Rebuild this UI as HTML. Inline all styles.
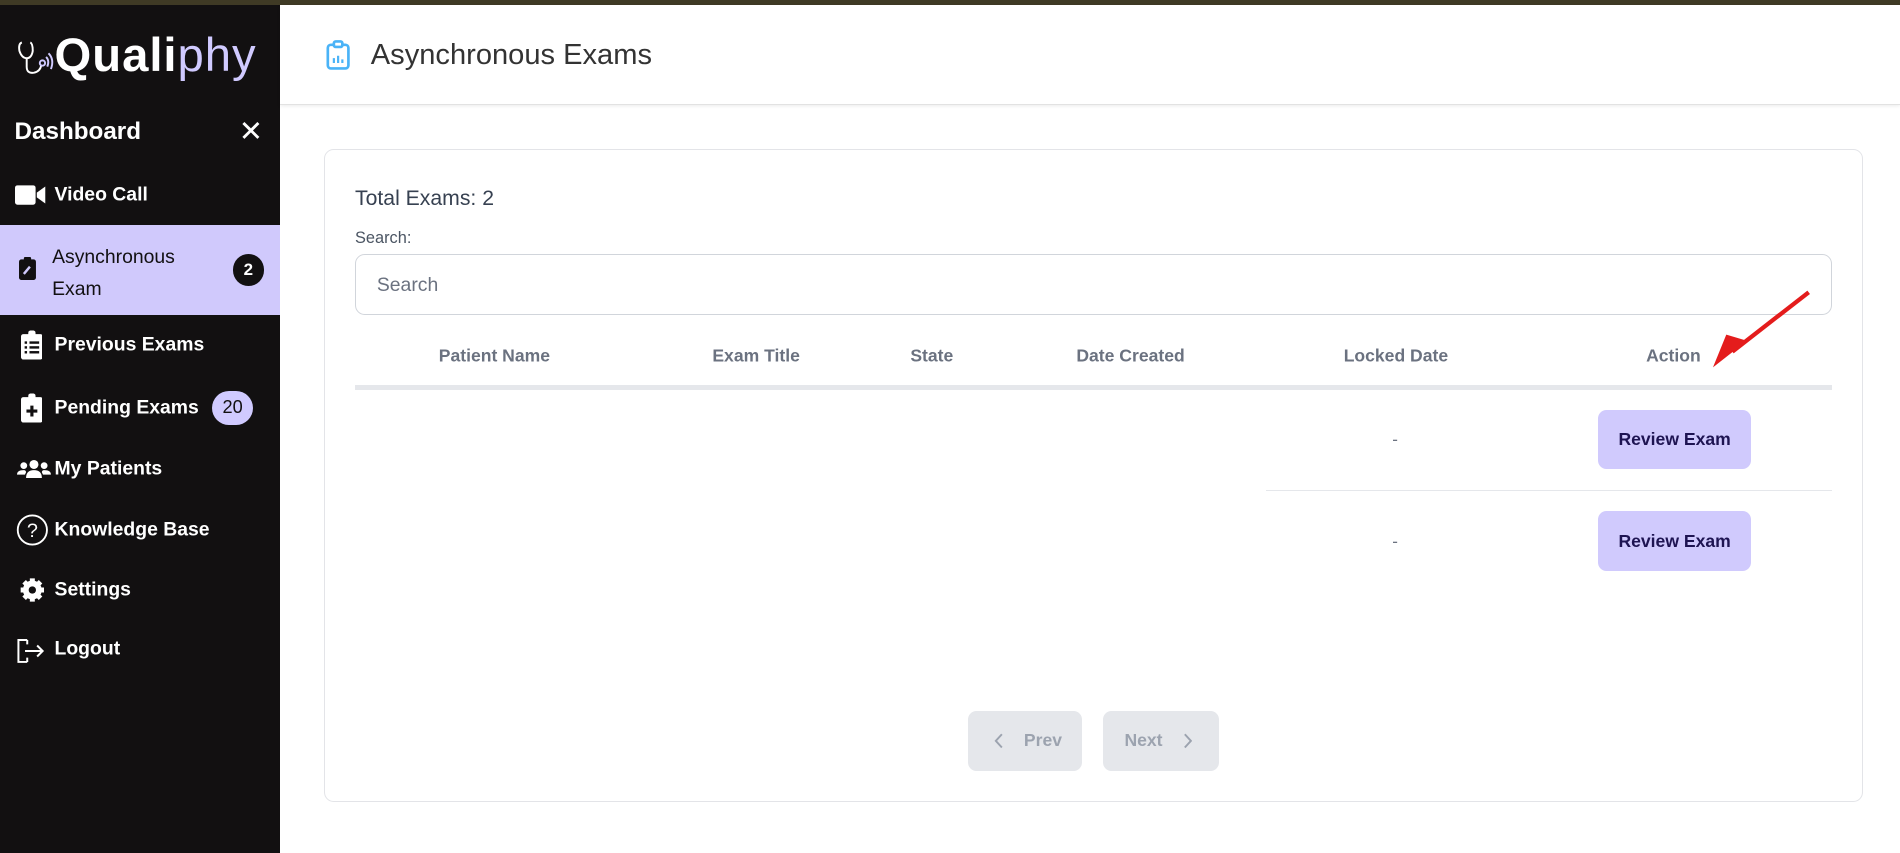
<!DOCTYPE html>
<html><head><meta charset="utf-8"><style>
html,body{margin:0;padding:0;width:1900px;height:853px;overflow:hidden;background:#fff;font-family:"Liberation Sans",sans-serif}
#w{zoom:1.21173;width:1568px;height:704px;position:relative;background:#fff}
.a{position:absolute;white-space:nowrap}
.sb{position:absolute;left:0;top:4px;width:231px;height:700px;background:#121011}
.ni{position:absolute;left:45px;color:#fff;font-size:16px;font-weight:bold;transform:translateY(-50%)}
.ic{position:absolute;left:12px;transform:translateY(-50%)}
.th{position:absolute;top:293px;transform:translate(-50%,-50%);font-size:14.5px;font-weight:bold;color:#6b7280}
.btn{position:absolute;left:1319px;width:126px;height:49px;background:#d0cafd;border-radius:7px;color:#1e1452;font-size:14.5px;font-weight:bold;display:flex;align-items:center;justify-content:center}
.dash{position:absolute;left:1149px;color:#6b7280;font-size:14px}
</style></head><body><div id="w">
<div class="a" style="left:0;top:0;width:1568px;height:4px;background:#3f3a25"></div>
<div class="sb"></div>
<svg class="a" style="left:14px;top:33px" width="32" height="30" viewBox="0 0 32 30" fill="none" stroke="#fff" stroke-width="1.6"><path d="M4 2 Q1 3 2 9 Q4 15 8 15 Q12 15 13 9 Q13 3 11 2"/><path d="M8 15 V22 Q8 28 14 27 Q19 26 20 21"/><circle cx="21" cy="19" r="2.2" stroke="#d0caff"/><path d="M24 14 Q27 17 25 22 M26 11 Q31 16 28 24" stroke="#d0caff"/></svg>
<div class="a" style="left:45px;top:23px;font-size:39px;font-weight:bold;color:#fff;letter-spacing:0.8px">Quali<span style="color:#d0caff;font-weight:normal">phy</span></div>
<div class="a" style="left:12px;top:97px;font-size:20px;font-weight:bold;color:#fff">Dashboard</div>
<div class="a" style="left:197px;top:94px;font-size:24px;color:#fff">✕</div>
<svg class="ic" style="top:161px" width="26" height="18" viewBox="0 0 26 18"><rect x="0" y="1" width="17" height="16" rx="2" fill="#fff"/><path d="M18 7 L25 2 V16 L18 11Z" fill="#fff"/></svg>
<div class="ni" style="top:161px">Video Call</div>
<div class="a" style="left:0;top:186px;width:231px;height:74px;background:#d0c9fc"></div>
<svg class="a" style="left:16px;top:212px" width="14" height="19" viewBox="0 0 14 19"><rect x="0" y="2" width="14" height="17" rx="2" fill="#121011"/><rect x="4" y="0" width="6" height="4" rx="1" fill="#121011"/><path d="M4 14 L9 8" stroke="#d0c9fc" stroke-width="2"/></svg>
<div class="a" style="left:43px;top:200px;font-size:16px;color:#121011;line-height:26px">Asynchronous<br>Exam</div>
<div class="a" style="left:192px;top:210px;width:26px;height:26px;border-radius:13px;background:#121011;color:#fff;font-weight:bold;font-size:14px;text-align:center;line-height:26px">2</div>
<svg class="ic" style="top:285px;left:17px" width="18" height="24" viewBox="0 0 18 24"><rect x="0" y="3" width="18" height="21" rx="2" fill="#fff"/><rect x="6" y="0" width="6" height="5" rx="2" fill="#fff"/><g fill="#121011"><rect x="3" y="9" width="2" height="2"/><rect x="7" y="9" width="8" height="2"/><rect x="3" y="13" width="2" height="2"/><rect x="7" y="13" width="8" height="2"/><rect x="3" y="17" width="2" height="2"/><rect x="7" y="17" width="8" height="2"/></g></svg>
<div class="ni" style="top:285px">Previous Exams</div>
<svg class="ic" style="top:337px;left:17px" width="18" height="24" viewBox="0 0 18 24"><rect x="0" y="3" width="18" height="21" rx="2" fill="#fff"/><rect x="6" y="0" width="6" height="5" rx="2" fill="#fff"/><path d="M9 10 V19 M4.5 14.5 H13.5" stroke="#121011" stroke-width="2.6"/></svg>
<div class="ni" style="top:337px">Pending Exams</div>
<div class="a" style="left:175px;top:323px;width:34px;height:28px;border-radius:14px;background:#d0caff;color:#121011;font-size:15px;text-align:center;line-height:28px">20</div>
<svg class="ic" style="top:387px;left:14px" width="28" height="18" viewBox="0 0 30 18" fill="#fff"><circle cx="15" cy="5" r="4"/><path d="M8 17 Q8 10 15 10 Q22 10 22 17Z"/><circle cx="6" cy="6" r="3"/><circle cx="24" cy="6" r="3"/><path d="M0 14 Q0 10 6 10 Q8 10 8 12 L7 14Z"/><path d="M30 14 Q30 10 24 10 Q22 10 22 12 L23 14Z"/></svg>
<div class="ni" style="top:387px">My Patients</div>
<svg class="ic" style="top:437px;left:13px" width="27" height="27" viewBox="0 0 28 28"><circle cx="14" cy="14" r="12.5" fill="none" stroke="#fff" stroke-width="1.6"/><text x="14" y="20" text-anchor="middle" fill="#fff" font-size="17" font-family="Liberation Sans">?</text></svg>
<div class="ni" style="top:437px">Knowledge Base</div>
<svg class="ic" style="top:487px;left:16px" width="22" height="22" viewBox="0 0 24 24"><g fill="#fff"><circle cx="12" cy="12" r="8.5"/><g stroke="#fff" stroke-width="4.5"><path d="M12 1.5V22.5M1.5 12H22.5M4.6 4.6L19.4 19.4M19.4 4.6L4.6 19.4"/></g></g><circle cx="12" cy="12" r="3.3" fill="#121011"/></svg>
<div class="ni" style="top:487px">Settings</div>
<svg class="ic" style="top:537px;left:13px" width="24" height="20" viewBox="0 0 26 22" fill="none" stroke="#fff" stroke-width="1.8"><path d="M10 1H2V21H10M10 1V5M10 21V17"/><path d="M8 11H24M19 6L24 11L19 16"/></svg>
<div class="ni" style="top:536px">Logout</div>

<div class="a" style="left:231px;top:4px;width:1337px;height:82px;background:#fff;border-bottom:1px solid #e2e2e2;box-shadow:0 1px 3px rgba(0,0,0,0.08)"></div>
<svg class="a" style="left:269px;top:33px" width="20" height="25" viewBox="0 0 20 25" fill="none" stroke="#4ab3f7" stroke-width="2.2"><rect x="1.5" y="4" width="17" height="19.5" rx="2.5"/><rect x="6.5" y="1.2" width="7" height="4.5" rx="1.5" fill="#fff"/><path d="M6.5 19V15M10 19V13M13.5 19V16" stroke-width="1.8"/></svg>
<div class="a" style="left:306px;top:32px;font-size:24px;color:#333">Asynchronous Exams</div>

<div class="a" style="left:267px;top:123px;width:1269px;height:537px;border:1px solid #e3e4e8;border-radius:8px;background:#fff"></div>
<div class="a" style="left:293px;top:154px;font-size:17.5px;color:#374151">Total Exams: 2</div>
<div class="a" style="left:293px;top:189px;font-size:13.5px;color:#4b5563">Search:</div>
<div class="a" style="left:293px;top:210px;width:1217px;height:48px;border:1px solid #d1d5db;border-radius:8px"></div>
<div class="a" style="left:311px;top:226px;font-size:16px;color:#6b7280">Search</div>
<div class="th" style="left:408px;top:294px">Patient Name</div>
<div class="th" style="left:624px;top:294px">Exam Title</div>
<div class="th" style="left:769px;top:294px">State</div>
<div class="th" style="left:933px;top:294px">Date Created</div>
<div class="th" style="left:1152px;top:294px">Locked Date</div>
<div class="th" style="left:1381px;top:294px">Action</div>
<div class="a" style="left:293px;top:318px;width:1219px;height:4px;background:#e5e7eb"></div>
<div class="dash" style="top:355px">-</div>
<div class="btn" style="top:338px">Review Exam</div>
<div class="a" style="left:1045px;top:404px;width:467px;height:1px;background:#e5e7eb"></div>
<div class="dash" style="top:439px">-</div>
<div class="btn" style="top:422px">Review Exam</div>
<svg class="a" style="left:1400px;top:235px" width="100" height="75" viewBox="0 0 100 75"><path d="M93 6 L30 55" stroke="#e41c1c" stroke-width="3.5"/><path d="M14 68 L42 46 L25 41 Z" fill="#e41c1c"/></svg>
<div class="a" style="left:799px;top:587px;width:94px;height:49px;background:#e5e7eb;border-radius:7px;color:#9ca3af;font-size:14.5px;font-weight:bold;line-height:49px"><svg style="position:absolute;left:21px;top:18px" width="8" height="13" viewBox="0 0 8 13"><path d="M6.5 1L1.5 6.5L6.5 12" fill="none" stroke="#9ca3af" stroke-width="1.6"/></svg><span style="position:absolute;left:46px">Prev</span></div>
<div class="a" style="left:910px;top:587px;width:96px;height:49px;background:#e5e7eb;border-radius:7px;color:#9ca3af;font-size:14.5px;font-weight:bold;line-height:49px"><span style="position:absolute;left:18px">Next</span><svg style="position:absolute;left:66px;top:18px" width="8" height="13" viewBox="0 0 8 13"><path d="M1.5 1L6.5 6.5L1.5 12" fill="none" stroke="#9ca3af" stroke-width="1.6"/></svg></div>
</div></body></html>
